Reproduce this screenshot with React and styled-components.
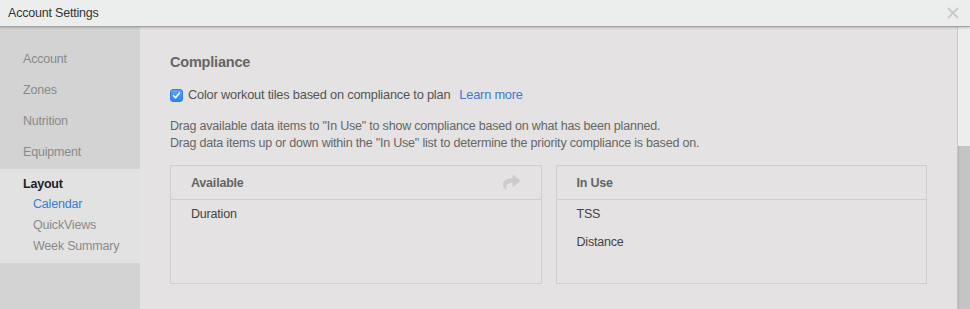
import React from "react";
import styled, { createGlobalStyle } from "styled-components";
import { FaShare } from "react-icons/fa";

const GlobalStyle = createGlobalStyle`
  html, body {
    margin: 0;
    padding: 0;
    overflow: hidden;
  }
  body {
    font-family: "Liberation Sans", Arial, Helvetica, sans-serif;
    font-size: 12.5px;
    letter-spacing: -0.2px;
    background: #e4e2e2;
  }
`;

const Window = styled.div`
  width: 970px;
  height: 309px;
  display: flex;
  flex-direction: column;
  overflow: hidden;
`;

const TitleBar = styled.header`
  height: 26px;
  flex: none;
  display: flex;
  align-items: center;
  justify-content: space-between;
  padding: 0 11px 0 8px;
  background: #eceeed;
  border-bottom: 1px solid #a3a3a3;
  box-shadow: 0 1px 2px rgba(0, 0, 0, 0.18);
  position: relative;
  z-index: 2;
`;

const Title = styled.h1`
  margin: 0;
  font-size: 12.5px;
  font-weight: normal;
  color: #333;
  line-height: 20px;
`;

const CloseButton = styled.button`
  border: 0;
  background: none;
  padding: 0;
  width: 12px;
  height: 12px;
  display: flex;
  cursor: pointer;
  svg {
    display: block;
  }
`;

const Body = styled.div`
  flex: 1;
  display: flex;
  min-height: 0;
`;

const Sidebar = styled.nav`
  width: 140px;
  flex: none;
  background: #d3d3d3;
  padding-top: 17px;
`;

const NavItem = styled.div`
  height: 31px;
  line-height: 31px;
  padding-left: 23px;
  color: #8a8a8a;
`;

const NavGroup = styled.div`
  margin-top: 1px;
  background: #e3e2e2;
  padding: 5px 0 6px;
`;

const GroupTitle = styled.div`
  line-height: 20px;
  padding-left: 23px;
  font-weight: bold;
  color: #222;
`;

const SubItem = styled.div`
  line-height: 21px;
  padding-left: 33px;
  color: ${(p) => (p.$active ? "#3a7bd0" : "#8a8a8a")};
`;

const Main = styled.main`
  flex: 1;
  padding: 25px 30px 0 30px;
  background: #e4e2e2;
`;

const Heading = styled.h2`
  margin: 0;
  font-size: 14.5px;
  line-height: 20px;
  font-weight: bold;
  color: #666;
`;

const CheckRow = styled.label`
  margin-top: 14px;
  display: flex;
  align-items: center;
  line-height: 18px;
  font-size: 12.8px;
  color: #555;
`;

const CheckBox = styled.span`
  width: 13px;
  height: 13px;
  border-radius: 3px;
  background: linear-gradient(#5ea4fb, #2f84f3);
  border: 1px solid #2d7ce0;
  box-sizing: border-box;
  display: flex;
  align-items: center;
  justify-content: center;
  margin-right: 5px;
`;

const LearnMore = styled.a`
  color: #3a7bd0;
  text-decoration: none;
  margin-left: 9px;
`;

const Description = styled.p`
  margin: 14px 0 0;
  line-height: 17px;
  color: #666;
`;

const Panels = styled.div`
  margin-top: 13px;
  display: grid;
  grid-template-columns: 1fr 1fr;
  gap: 14px;
`;

const Panel = styled.section`
  border: 1px solid #cfcdcd;
  height: 119px;
  box-sizing: border-box;
`;

const PanelHeader = styled.div`
  height: 33px;
  border-bottom: 1px solid #cfcdcd;
  display: flex;
  align-items: center;
  justify-content: space-between;
  padding: 0 21px 0 20px;
  font-weight: bold;
  color: #666;
`;

const PanelItem = styled.div`
  line-height: 28px;
  padding-left: 20px;
  color: #444;
`;

const Scrollbar = styled.div`
  width: 13px;
  flex: none;
  display: flex;
  flex-direction: column;
  border-left: 1px solid #c8c8c8;
  box-sizing: border-box;
  background: #eceeee;
`;

const ScrollTrack = styled.div`
  height: 119px;
`;

const ScrollThumb = styled.div`
  flex: 1;
  background: #c4c4c4;
  border-left: 1px solid #b5b5b5;
`;

const sidebarItems = ["Account", "Zones", "Nutrition", "Equipment"];
const layoutItems = ["Calendar", "QuickViews", "Week Summary"];

export default function App() {
  return (
    <Window>
      <GlobalStyle />
      <TitleBar>
        <Title>Account Settings</Title>
        <CloseButton aria-label="close">
          <svg width="12" height="12" viewBox="0 0 12 12">
            <path d="M1 1L11 11M11 1L1 11" stroke="#c8c8c8" strokeWidth="1.8" />
          </svg>
        </CloseButton>
      </TitleBar>
      <Body>
        <Sidebar>
          {sidebarItems.map((item) => (
            <NavItem key={item}>{item}</NavItem>
          ))}
          <NavGroup>
            <GroupTitle>Layout</GroupTitle>
            {layoutItems.map((item) => (
              <SubItem key={item} $active={item === "Calendar"}>
                {item}
              </SubItem>
            ))}
          </NavGroup>
        </Sidebar>
        <Main>
          <Heading>Compliance</Heading>
          <CheckRow>
            <CheckBox>
              <svg width="9" height="9" viewBox="0 0 9 9">
                <path
                  d="M1.6 4.8L3.6 6.8L7.4 2"
                  fill="none"
                  stroke="#fff"
                  strokeWidth="1.6"
                  strokeLinecap="round"
                  strokeLinejoin="round"
                />
              </svg>
            </CheckBox>
            Color workout tiles based on compliance to plan
            <LearnMore href="#">Learn more</LearnMore>
          </CheckRow>
          <Description>
            Drag available data items to "In Use" to show compliance based on what has been planned.
            <br />
            Drag data items up or down within the "In Use" list to determine the priority compliance is based on.
          </Description>
          <Panels>
            <Panel>
              <PanelHeader>
                Available
                <FaShare size={17} color="#cccccc" />
              </PanelHeader>
              <PanelItem>Duration</PanelItem>
            </Panel>
            <Panel>
              <PanelHeader>In Use</PanelHeader>
              <PanelItem>TSS</PanelItem>
              <PanelItem>Distance</PanelItem>
            </Panel>
          </Panels>
        </Main>
        <Scrollbar>
          <ScrollTrack />
          <ScrollThumb />
        </Scrollbar>
      </Body>
    </Window>
  );
}
